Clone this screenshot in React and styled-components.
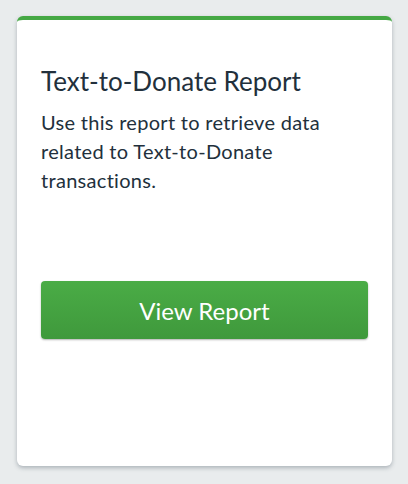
import React from "react";
import styled, { createGlobalStyle } from "styled-components";

const Global = createGlobalStyle`
  html, body {
    margin: 0;
    padding: 0;
    background: #e9eced;
  }
  body {
    font-family: "Lato", "Liberation Sans", sans-serif;
  }
`;

function App() {
  return (
    <>
      <Global />
      <Page>
        <Card>
          <Title>Text-to-Donate Report</Title>
          <Description>
            Use this report to retrieve data related to Text-to-Donate
            transactions.
          </Description>
          <Button type="button">View Report</Button>
        </Card>
      </Page>
    </>
  );
}

export default App;

const Page = styled.div`
  padding: 16px 16px 18px 17px;
`;

const Card = styled.div`
  box-sizing: border-box;
  width: 375px;
  height: 450px;
  background: #ffffff;
  border-top: 4px solid #45a844;
  border-radius: 6px;
  box-shadow: 0 2px 4px rgba(60, 75, 90, 0.35);
  padding: 45px 24px 0 24px;
  display: flex;
  flex-direction: column;
`;

const Title = styled.h2`
  margin: 0;
  font-size: 26px;
  font-weight: 400;
  line-height: 32px;
  color: #22303c;
`;

const Description = styled.p`
  margin: 11px 0 0 0;
  font-size: 20px;
  letter-spacing: 0.3px;
  line-height: 29px;
  color: #22303c;
`;

const Button = styled.button`
  margin-top: 86px;
  flex-shrink: 0;
  height: 58px;
  width: 100%;
  border: none;
  border-radius: 4px;
  background: linear-gradient(#4aac46, #3f993c);
  box-shadow: 0 1px 2px rgba(0, 0, 0, 0.3);
  color: #ffffff;
  font-family: inherit;
  font-size: 24px;
  cursor: pointer;
`;
